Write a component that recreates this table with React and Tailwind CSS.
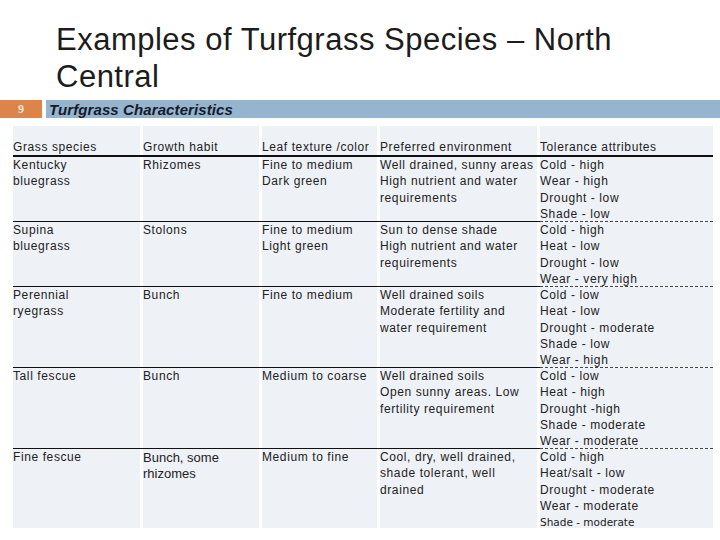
import React from 'react';

const widths = ['w-[130px]', 'w-[119px]', 'w-[118px]', 'w-[160px]', 'w-[173px]'];

const headers = ['Grass species', 'Growth habit', 'Leaf texture /color', 'Preferred environment', 'Tolerance attributes'];

const rows = [
  {
    h: 'h-[65px]',
    cells: [
      ['Kentucky', 'bluegrass'],
      ['Rhizomes'],
      ['Fine to medium', 'Dark green'],
      ['Well drained, sunny areas', 'High nutrient and water', 'requirements'],
      ['Cold - high', 'Wear - high', 'Drought - low', 'Shade - low'],
    ],
  },
  {
    h: 'h-[65px]',
    cells: [
      ['Supina', 'bluegrass'],
      ['Stolons'],
      ['Fine to medium', 'Light green'],
      ['Sun to dense shade', 'High nutrient and water', 'requirements'],
      ['Cold - high', 'Heat - low', 'Drought - low', 'Wear - very high'],
    ],
  },
  {
    h: 'h-[81px]',
    cells: [
      ['Perennial', 'ryegrass'],
      ['Bunch'],
      ['Fine to medium'],
      ['Well drained soils', 'Moderate fertility and', 'water requirement'],
      ['Cold - low', 'Heat - low', 'Drought - moderate', 'Shade - low', 'Wear - high'],
    ],
  },
  {
    h: 'h-[81px]',
    cells: [
      ['Tall fescue'],
      ['Bunch'],
      ['Medium to coarse'],
      ['Well drained soils', 'Open sunny areas. Low', 'fertility requirement'],
      ['Cold - low', 'Heat - high', 'Drought -high', 'Shade - moderate', 'Wear - moderate'],
    ],
  },
];

const Lines = ({ lines }) => (
  <div>
    {lines.map((line) => (
      <div key={line} className="whitespace-nowrap">{line}</div>
    ))}
  </div>
);

const App = () => {
  return (
    <div className="w-[720px] h-[540px] bg-white overflow-hidden font-['Liberation_Sans',Arial,sans-serif]">
      <div className="pt-[21px] pl-[56px] text-[31px] leading-[37px] tracking-[0.5px] text-[#1c1c1c]">
        <div>Examples of Turfgrass Species – North</div>
        <div>Central</div>
      </div>

      <div className="flex mt-[5px] h-[18px]">
        <div className="w-[42px] bg-[#dc844a] flex items-center justify-center">
          <span className="text-[12px] font-bold text-[#fdebdc] font-['Liberation_Serif',serif]">9</span>
        </div>
        <div className="ml-[4px] flex-1 bg-[#94b4d0] flex items-center pl-[3px]">
          <span className="text-[15px] font-bold italic text-[#151a26] leading-none tracking-[0.1px]">Turfgrass Characteristics</span>
        </div>
      </div>

      <div className="mt-[8px] ml-[13px] text-[12px] leading-[16.25px] tracking-[0.6px] text-[#222]">
        <div className="flex h-[31px]">
          {headers.map((text, i) => (
            <div key={text} className={`${widths[i]} ${i < 4 ? 'pr-[3px]' : ''} border-b-2 border-[#111]`}>
              <div className="h-full bg-[#eef1f6] flex items-end whitespace-nowrap">{text}</div>
            </div>
          ))}
        </div>

        {rows.map((row, r) => (
          <div key={r} className={`flex ${row.h}`}>
            {row.cells.map((lines, i) => (
              <div
                key={i}
                className={`${widths[i]} ${i < 4 ? 'pr-[3px] border-b border-solid border-[#111]' : 'border-b border-dashed border-[#444]'}`}
              >
                <div className="h-full bg-[#eef1f6]">
                  <Lines lines={lines} />
                </div>
              </div>
            ))}
          </div>
        ))}

        <div className="flex h-[79px]">
          <div className="w-[130px] pr-[3px]">
            <div className="h-full bg-[#eef1f6]">Fine fescue</div>
          </div>
          <div className="w-[119px] pr-[3px]">
            <div className="h-full bg-[#eef1f6] text-[13px] leading-[16px] tracking-normal pt-[1px]">
              <div>Bunch, some</div>
              <div>rhizomes</div>
            </div>
          </div>
          <div className="w-[118px] pr-[3px]">
            <div className="h-full bg-[#eef1f6]">Medium to fine</div>
          </div>
          <div className="w-[160px] pr-[3px]">
            <div className="h-full bg-[#eef1f6]">
              <Lines lines={['Cool, dry, well drained,', 'shade tolerant, well', 'drained']} />
            </div>
          </div>
          <div className="w-[173px]">
            <div className="h-full bg-[#eef1f6]">
              <Lines lines={['Cold - high', 'Heat/salt - low', 'Drought - moderate', 'Wear - moderate']} />
              <div className="font-['DejaVu_Sans',sans-serif] text-[10.5px] tracking-normal leading-[16.25px] whitespace-nowrap">
                Shade - moderate
              </div>
            </div>
          </div>
        </div>
      </div>
    </div>
  );
};

export default App;
